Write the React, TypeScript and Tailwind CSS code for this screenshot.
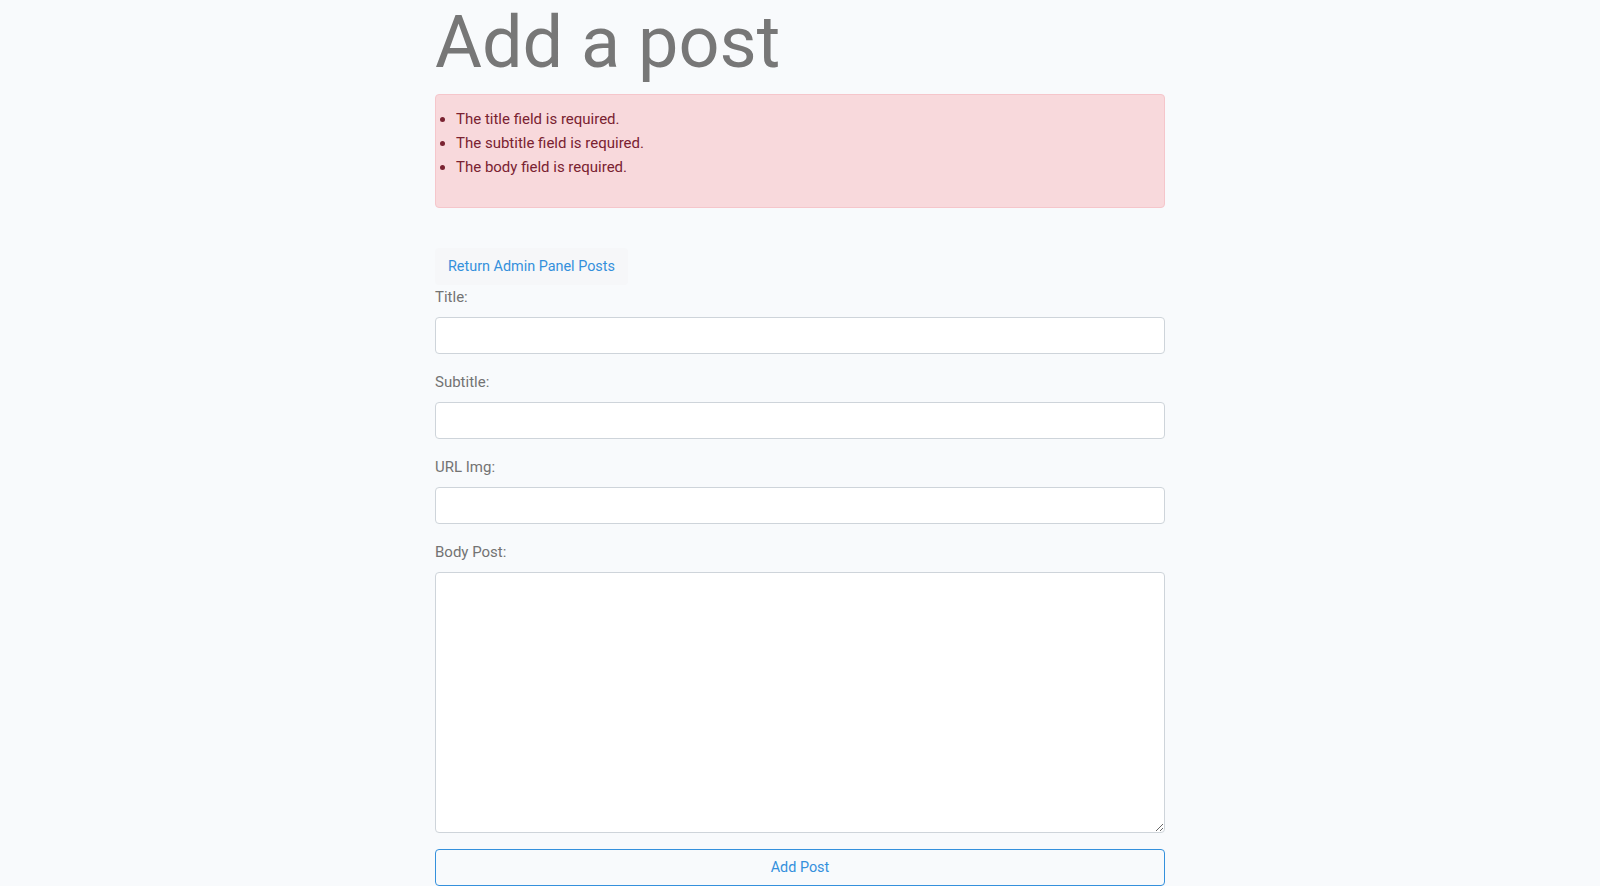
export default function App() {
  return (
    <div className="min-h-screen bg-[#f8fafc] font-['Roboto','Liberation_Sans',sans-serif] text-[15px] leading-[24px] text-[#212529]">
      <div className="w-[730px] mx-auto">
        <h1 className="text-[72px] leading-[86px] font-normal text-[#777777] mb-2">Add a post</h1>

        {/* validation errors */}
        <div className="border border-[#f5c6cb] bg-[#f8d9dc] text-[#7a2231] rounded px-5 py-3 mb-4">
          <ul className="list-disc pl-0 mb-4">
            <li>The title field is required.</li>
            <li>The subtitle field is required.</li>
            <li>The body field is required.</li>
          </ul>
        </div>

        <div className="pt-6">
          <a href="#" className="inline-block bg-[#f6f7f9] border border-[#f6f7f9] rounded px-3 py-1.5 text-[14.4px] leading-[23px] text-[#3490dc]">
            Return Admin Panel Posts
          </a>
        </div>

        <form onSubmit={(e) => e.preventDefault()}>
          <Field label="Title:" />
          <Field label="Subtitle:" />
          <Field label="URL Img:" />
          <div className="mb-4">
            <label className="block mb-2 text-[#737373]">Body Post:</label>
            <textarea className="block w-full h-[261px] bg-white border border-[#ced4da] rounded px-3 py-1.5 outline-none" />
          </div>
          <button type="submit" className="block w-full border border-[#3490dc] text-[#3490dc] rounded px-3 py-1.5 text-[14.4px] leading-[23px] bg-transparent">
            Add Post
          </button>
        </form>
      </div>
    </div>
  );
}

function Field({ label }: { label: string }) {
  return (
    <div className="mb-4">
      <label className="block mb-2 text-[#737373]">{label}</label>
      <input type="text" className="block w-full h-[37px] bg-white border border-[#ced4da] rounded px-3 py-1.5 outline-none" />
    </div>
  );
}
